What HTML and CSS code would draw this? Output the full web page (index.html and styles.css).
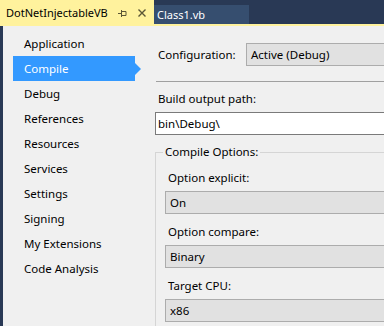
FILE: index.html
```html
<!DOCTYPE html>
<html>
<head>
<meta charset="utf-8">
<link rel="stylesheet" href="styles.css">
</head>
<body>
<div class="tabbar">
  <div class="tab active">
    <span class="tab-title">DotNetInjectableVB</span>
    <svg class="pin" width="9" height="8" viewBox="0 0 9 8"><path d="M0 4.5h3M3.5 1v7M3.5 2.5h4.5v4H3.5" fill="none" stroke="#5b5636" stroke-width="1"/></svg>
    <svg class="close" width="8" height="8" viewBox="0 0 8 8"><path d="M0.5 0.5l7 7M7.5 0.5l-7 7" stroke="#5b5636" stroke-width="1.4"/></svg>
  </div>
  <div class="tab inactive"><span class="tab-title">Class1.vb</span></div>
</div>
<div class="tabline"></div>
<div class="main">
  <ul class="nav">
    <li class="nav-item">Application</li>
    <li class="nav-item selected">Compile</li>
    <li class="nav-item">Debug</li>
    <li class="nav-item">References</li>
    <li class="nav-item">Resources</li>
    <li class="nav-item">Services</li>
    <li class="nav-item">Settings</li>
    <li class="nav-item">Signing</li>
    <li class="nav-item">My Extensions</li>
    <li class="nav-item">Code Analysis</li>
  </ul>
  <div class="panel">
    <div class="config-row">
      <span class="config-label">Configuration:</span>
      <div class="combo config-combo">Active (Debug)</div>
    </div>
    <div class="separator"></div>
    <div class="label first">Build output path:</div>
    <div class="textbox">bin\Debug\</div>
    <fieldset class="group">
      <legend class="group-title">Compile Options:</legend>
      <div class="label">Option explicit:</div>
      <div class="combo">On</div>
      <div class="label">Option compare:</div>
      <div class="combo">Binary</div>
      <div class="label">Target CPU:</div>
      <div class="combo">x86</div>
    </fieldset>
  </div>
</div>
</body>
</html>
```
FILE: styles.css
```css
html, body {
  margin: 0;
  padding: 0;
  width: 384px;
  height: 326px;
  overflow: hidden;
  background: #f0f0f0;
  font-family: "Noto Sans", "DejaVu Sans", sans-serif;
  font-size: 11.5px;
  color: #000;
}

.tabbar {
  display: flex;
  align-items: flex-end;
  height: 24px;
  background: #293955;
  overflow: hidden;
}

.tab {
  display: flex;
  align-items: center;
  box-sizing: border-box;
  font-size: 11px;
}

.tab.active {
  width: 154px;
  height: 24px;
  background: #fff29d;
  padding: 1px 8px 0 6px;
  color: #000;
}

.tab.inactive {
  width: 95px;
  height: 19px;
  background: #364e6f;
  color: #fff;
  padding: 0 0 1px 3px;
}

.pin {
  margin-left: auto;
}

.close {
  margin-left: 11px;
}

.tabline {
  height: 2px;
  background: #fff29d;
}

.main {
  display: flex;
  height: 300px;
  border-left: 3px solid #293955;
  overflow: hidden;
}

.nav {
  list-style: none;
  margin: 0;
  padding: 5px 0 0 10px;
  width: 142px;
  flex: none;
}

.nav-item {
  height: 25px;
  line-height: 25px;
  width: 122px;
  box-sizing: border-box;
  padding-left: 11px;
  color: #000;
}

.nav-item.selected {
  position: relative;
  background: #3399ff;
  color: #fff;
}

.nav-item.selected::after {
  content: "";
  position: absolute;
  right: -6px;
  top: 7px;
  border-left: 6px solid #3399ff;
  border-top: 6px solid transparent;
  border-bottom: 6px solid transparent;
}

.panel {
  flex: none;
  width: 260px;
  padding-top: 17px;
}

.config-row {
  display: flex;
  height: 23px;
  align-items: center;
}

.config-label {
  flex: none;
  width: 88px;
  padding-left: 3px;
}

.combo {
  box-sizing: border-box;
  height: 23px;
  line-height: 21px;
  border: 1px solid #acacac;
  background: #e1e1e1;
  padding-left: 4px;
  width: 300px;
}

.config-combo {
  flex: none;
  padding-left: 4px;
}

.separator {
  margin-top: 15px;
  height: 1px;
  background: #a0a0a0;
  margin-left: 1px;
}

.label {
  height: 16px;
  line-height: 16px;
  margin-top: 9px;
  padding-left: 3px;
}

.textbox {
  box-sizing: border-box;
  margin-top: 5px;
  height: 23px;
  line-height: 21px;
  width: 300px;
  border: 1px solid #7a7a7a;
  background: #fff;
  padding-left: 2px;
}

.group {
  margin: 9px 0 0 0;
  padding: 0 0 0 9px;
  border: 1px solid #d5d5d5;
  border-right: none;
  width: 300px;
  height: 200px;
  box-sizing: border-box;
}

.group-title {
  padding: 0 2px;
  margin-left: -2px;
  height: 16px;
  line-height: 16px;
}

.group .combo {
  margin-top: 5px;
}

.group .label {
  margin-top: 10px;
}
```
